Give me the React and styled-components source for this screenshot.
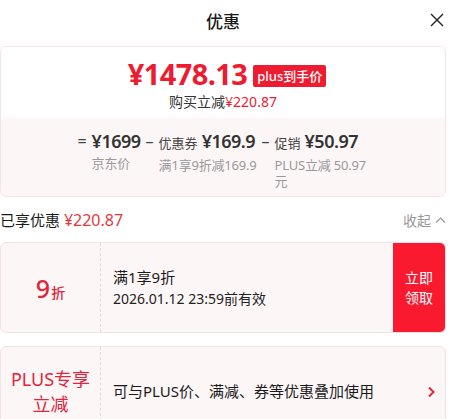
import React from "react";
import styled, { createGlobalStyle } from "styled-components";

const Global = createGlobalStyle`
  html, body { margin: 0; padding: 0; background: #fff; overflow: hidden; }
  body { font-family: "Noto Sans", "Noto Sans CJK SC", sans-serif; color: #1a1a1a; }
  * { box-sizing: border-box; }
`;

const Page = styled.div`
  width: 446px;
  display: flex;
  flex-direction: column;
`;

const Header = styled.div`
  height: 40px;
  display: flex;
  align-items: center;
  justify-content: center;
  position: relative;
`;

const Title = styled.div`
  font-size: 17px;
  font-weight: 500;
  color: #1a1a1a;
`;

const Close = styled.div`
  position: absolute;
  right: 1px;
  top: 12px;
  width: 16px;
  height: 16px;
  display: flex;
`;

const SummaryCard = styled.div`
  margin-top: 6px;
  border: 1px solid #f6e4e7;
  border-radius: 6px;
  overflow: hidden;
  display: flex;
  flex-direction: column;
`;

const SummaryTop = styled.div`
  height: 71px;
  background: #fff;
  display: flex;
  flex-direction: column;
  align-items: center;
  padding-top: 10px;
`;

const PriceLine = styled.div`
  display: flex;
  align-items: center;
  gap: 6px;
  height: 34px;
  line-height: 34px;
  margin-left: 8px;
`;

const Price = styled.div`
  color: #ee1c30;
  font-family: "Noto Sans", sans-serif;
  font-weight: 700;
  font-size: 29px;
  letter-spacing: -0.6px;
`;

const Badge = styled.div`
  background: #ee1c30;
  color: #fff;
  font-size: 13px;
  font-weight: 500;
  border-radius: 2px;
  padding: 0 4px;
  height: 22px;
  line-height: 22px;
  margin-top: 3px;
`;

const SubLine = styled.div`
  font-size: 14px;
  color: #333;
  line-height: 18px;
  margin-top: 2px;
  span { color: #ee1c30; }
`;

const SummaryBottom = styled.div`
  background: #fdf6f7;
  height: 78px;
  display: flex;
  justify-content: center;
  padding-top: 10px;
  padding-right: 2px;
  gap: 5px;
`;

const Col = styled.div`
  display: flex;
  align-items: flex-start;
  gap: 5px;
`;

const Op = styled.div`
  font-size: 16px;
  color: #444;
  line-height: 26px;
`;

const ColBody = styled.div`
  display: flex;
  flex-direction: column;
`;

const AmountRow = styled.div`
  display: flex;
  align-items: baseline;
  gap: 4px;
  line-height: 26px;
`;

const Prefix = styled.span`
  font-size: 13px;
  color: #444;
`;

const Amount = styled.span`
  font-size: 18px;
  font-weight: 600;
  color: #333;
  letter-spacing: -0.5px;
`;

const Desc = styled.div`
  font-size: 13px;
  color: #999;
  line-height: 16px;
  margin-top: 1px;
  letter-spacing: -0.2px;
  padding-left: ${(p) => p.$indent || 0}px;
  max-width: ${(p) => p.$max || 200}px;
`;

const SavedRow = styled.div`
  height: 45px;
  display: flex;
  align-items: center;
  justify-content: space-between;
`;

const SavedText = styled.div`
  font-size: 15px;
  color: #1a1a1a;
  span { color: #e4393c; font-size: 16px; }
`;

const Fold = styled.div`
  font-size: 14px;
  color: #999;
  display: flex;
  align-items: center;
  gap: 4px;
`;

const Coupon = styled.div`
  height: 91px;
  border: 1px solid #f3e2e5;
  border-radius: 6px;
  background: #fdf6f7;
  display: flex;
  overflow: hidden;
  margin-bottom: ${(p) => p.$mb || 0}px;
`;

const CouponLeft = styled.div`
  width: 100px;
  flex: none;
  border-right: 1px dashed #e6d8db;
  display: flex;
  align-items: center;
  justify-content: center;
  color: #e1253c;
  text-align: center;
`;

const Discount = styled.div`
  display: flex;
  align-items: baseline;
  font-size: 25px;
  font-weight: 500;
  span { font-size: 14px; margin-left: 1px; }
`;

const PlusLabel = styled.div`
  font-size: 18px;
  line-height: 25px;
`;

const CouponMid = styled.div`
  flex: 1;
  display: flex;
  flex-direction: column;
  justify-content: center;
  padding-left: 12px;
  gap: 1px;
`;

const CouponTitle = styled.div`
  font-size: 15px;
  color: #1a1a1a;
  line-height: 21px;
`;

const CouponSub = styled.div`
  font-size: 14px;
  color: #222;
  line-height: 20px;
`;

const GetButton = styled.div`
  width: 52px;
  flex: none;
  background: #fa1a2f;
  color: #fff;
  font-size: 14px;
  line-height: 20px;
  display: flex;
  align-items: center;
  justify-content: center;
  text-align: center;
  padding: 0 10px;
`;

const Chevron = styled.div`
  width: 28px;
  flex: none;
  display: flex;
  align-items: center;
  justify-content: center;
`;

export default function App() {
  return (
    <>
      <Global />
      <Page>
        <Header>
          <Title>优惠</Title>
          <Close>
            <svg width="16" height="16" viewBox="0 0 16 16">
              <path d="M2 2 L14 14 M14 2 L2 14" stroke="#222" strokeWidth="1.4" fill="none" />
            </svg>
          </Close>
        </Header>

        <SummaryCard>
          <SummaryTop>
            <PriceLine>
              <Price>¥1478.13</Price>
              <Badge>plus到手价</Badge>
            </PriceLine>
            <SubLine>
              购买立减<span>¥220.87</span>
            </SubLine>
          </SummaryTop>
          <SummaryBottom>
            <Col>
              <Op>=</Op>
              <ColBody>
                <AmountRow>
                  <Amount>¥1699</Amount>
                </AmountRow>
                <Desc $indent={0}>京东价</Desc>
              </ColBody>
            </Col>
            <Col>
              <Op>–</Op>
              <ColBody>
                <AmountRow>
                  <Prefix>优惠券</Prefix>
                  <Amount>¥169.9</Amount>
                </AmountRow>
                <Desc>满1享9折减169.9</Desc>
              </ColBody>
            </Col>
            <Col>
              <Op>–</Op>
              <ColBody>
                <AmountRow>
                  <Prefix>促销</Prefix>
                  <Amount>¥50.97</Amount>
                </AmountRow>
                <Desc $max={92}>PLUS立减 50.97 元</Desc>
              </ColBody>
            </Col>
          </SummaryBottom>
        </SummaryCard>

        <SavedRow>
          <SavedText>
            已享优惠 <span>¥220.87</span>
          </SavedText>
          <Fold>
            收起
            <svg width="11" height="8" viewBox="0 0 11 8">
              <path d="M1 6.5 L5.5 2 L10 6.5" stroke="#999" strokeWidth="1.2" fill="none" />
            </svg>
          </Fold>
        </SavedRow>

        <Coupon $mb={13}>
          <CouponLeft>
            <Discount>
              9<span>折</span>
            </Discount>
          </CouponLeft>
          <CouponMid>
            <CouponTitle>满1享9折</CouponTitle>
            <CouponSub>2026.01.12 23:59前有效</CouponSub>
          </CouponMid>
          <GetButton>立即领取</GetButton>
        </Coupon>

        <Coupon>
          <CouponLeft>
            <PlusLabel>
              PLUS专享
              <br />
              立减
            </PlusLabel>
          </CouponLeft>
          <CouponMid>
            <CouponTitle>可与PLUS价、满减、券等优惠叠加使用</CouponTitle>
          </CouponMid>
          <Chevron>
            <svg width="10" height="12" viewBox="0 0 10 12">
              <path d="M3 1.5 L7.5 6 L3 10.5" stroke="#e1253c" strokeWidth="2" fill="none" />
            </svg>
          </Chevron>
        </Coupon>
      </Page>
    </>
  );
}
